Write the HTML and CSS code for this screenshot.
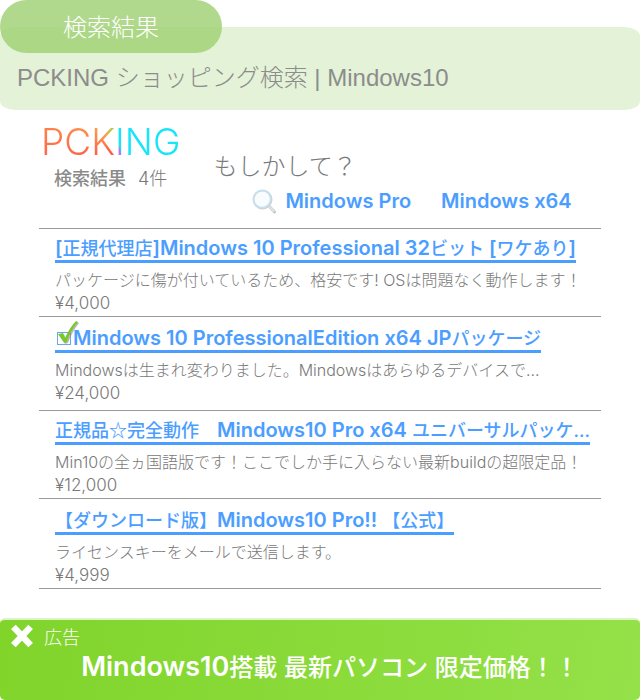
FILE: index.html
```html
<!DOCTYPE html>
<html lang="ja">
<head>
<meta charset="utf-8">
<meta name="viewport" content="width=device-width, initial-scale=1">
<title>PCKING ショッピング検索</title>
<link rel="stylesheet" href="styles.css">
</head>
<body>
<header class="header">
  <div class="tab">検索結果</div>
  <div class="banner"><h1 class="banner-title">PCKING ショッピング検索 | Mindows10</h1></div>
</header>
<main class="main">
  <section class="summary">
    <div class="brand">
      <div class="logo">PCKING</div>
      <p class="count"><b>検索結果</b><span>4件</span></p>
    </div>
    <div class="suggest">
      <p class="suggest-title">もしかして？</p>
      <nav class="suggest-links">
        <svg class="lens" viewBox="0 0 26 26" aria-hidden="true">
          <path d="M18 18l5.500 6" stroke="#c4c4c4" stroke-width="3" stroke-linecap="round"/>
          <path d="M17 17l5.500 6" stroke="#d3e6f2" stroke-width="2" stroke-linecap="round"/>
          <circle cx="11.500" cy="11.500" r="9" fill="#f8fcfe" stroke="#d2d2d2" stroke-width="2"/>
          <circle cx="11" cy="11" r="8.500" fill="none" stroke="#c3e2f5" stroke-width="1.500"/>
        </svg>
        <a class="suggest-link" href="#pro">Mindows Pro</a>
        <a class="suggest-link" href="#x64">Mindows x64</a>
      </nav>
    </div>
  </section>
  <ul class="results">
    <li class="item">
      <a class="title" href="#1"><span class="latin">[</span>正規代理店<span class="latin">]Mindows 10 Professional 32</span>ビット<span class="latin"> [</span>ワケあり<span class="latin">]</span></a>
      <p class="text">パッケージに傷が付いているため、格安です! OSは問題なく動作します！</p>
      <p class="text price">¥4,000</p>
    </li>
    <li class="item item-picked">
      <a class="title" href="#2"><svg class="check" viewBox="0 0 24 28" aria-hidden="true"><rect x="2.500" y="12.500" width="13" height="12" fill="#fff" stroke="#68a9ee"/><path d="M4 15l5-1 2 5Q16 8 22 2l2 1Q17 12 13 23l-3 1z" fill="#8c8c8c" opacity=".6"/><path d="M3 14l5-1 2 5Q15 7 21 1l2 1Q15 11 11.500 22.500H9z" fill="#79c82b"/></svg><span class="latin">Mindows 10 ProfessionalEdition x64 JP</span>パッケージ</a>
      <p class="text">Mindowsは生まれ変わりました。Mindowsはあらゆるデバイスで...</p>
      <p class="text price">¥24,000</p>
    </li>
    <li class="item">
      <a class="title" href="#3">正規品<span class="star">☆</span>完全動作　<span class="latin">Mindows10 Pro x64 </span>ユニバーサルパッケ...</a>
      <p class="text">Min10の全ヵ国語版です！ここでしか手に入らない最新buildの超限定品！</p>
      <p class="text price">¥12,000</p>
    </li>
    <li class="item item-last">
      <a class="title" href="#4">【ダウンロード版】<span class="latin">Mindows10 Pro!! </span>【公式】</a>
      <p class="text">ライセンスキーをメールで送信します。</p>
      <p class="text price">¥4,999</p>
    </li>
  </ul>
</main>
<footer class="ad">
  <div class="ad-head">
    <button class="close" type="button" aria-label="閉じる"><svg viewBox="0 0 24 26" aria-hidden="true"><path d="M4 4.500l16 17M20 4.500l-16 17" stroke="#fff" stroke-width="6"/></svg></button>
    <span>広告</span>
  </div>
  <a class="ad-text" href="#ad"><span class="ad-latin">Mindows10</span>搭載<span class="ad-latin"> </span>最新パソコン<span class="ad-latin"> </span>限定価格！！</a>
</footer>
</body>
</html>
```
FILE: styles.css
```css
* { box-sizing: border-box; }
body {
  margin: 0;
  min-height: 100vh;
  display: flex;
  flex-direction: column;
  background: #fff;
  color: #787878;
  font-family: Inter, "Noto Sans CJK JP", sans-serif;
  font-size: 16px;
}
h1, p, ul { margin: 0; padding: 0; font-weight: 400; }
a { text-decoration: none; }
.tab {
  position: relative;
  width: 222px;
  height: 53px;
  margin-bottom: -26px;
  border-radius: 27px;
  background: rgba(157, 207, 112, .8);
  color: #fff;
  font-size: 24px;
  font-weight: 300;
  line-height: 56px;
  text-align: center;
}
.banner {
  padding: 33px 17px 14px;
  border-radius: 16px / 9px;
  background: #e4f2d7;
}
.banner-title {
  color: #8c8c8c;
  font-family: "Liberation Sans", "Noto Sans CJK JP", sans-serif;
  font-size: 24px;
  font-weight: 300;
  line-height: 36px;
}
.main { padding: 10px 39px 0; }
.summary { display: flex; gap: 33px; height: 108px; }
.logo {
  margin-left: 2px;
  font-size: 37px;
  font-weight: 300;
  line-height: 44px;
  background: conic-gradient(from 0deg at 56% 60%, #18e4fa 0 40%, #9b7cff 47%, #ff70cf 53%, #ff5b45 62%, #ff654b 72%, #ff9b4a 86%, #b7cf45 94%, #18e4fa);
  -webkit-background-clip: text;
  background-clip: text;
  color: transparent;
}
.count { display: flex; gap: 12px; padding-left: 15px; font-size: 18px; font-weight: 300; line-height: 30px; }
.count b { color: #8a8a8a; font-weight: 500; }
.suggest { padding-top: 29px; }
.suggest-title { font-size: 24px; font-weight: 300; line-height: 36px; }
.suggest-links { display: flex; align-items: center; padding-left: 38px; gap: 30px; }
.lens { width: 26px; height: 26px; margin-right: -22px; fill: none; }
.suggest-link { color: #4b9eff; font-size: 20px; font-weight: 600; line-height: 32px; }
.results { list-style: none; border-top: 1px solid #999; }
.item { padding: 8px 0 1px 16px; border-bottom: 1px solid #999; }
.item-picked { padding-top: 10px; padding-bottom: 5px; }
.item-last { padding-top: 10px; }
.title {
  display: table;
  margin-bottom: 6px;
  border-bottom: 3px solid #4b9eff;
  color: #4b9eff;
  font-size: 18px;
  font-weight: 500;
  line-height: 23px;
  white-space: nowrap;
}
.latin { font-size: 20px; font-weight: 600; }
.star { font-family: "Noto Sans CJK JP", sans-serif; line-height: 1; }
.check { width: 24px; height: 28px; margin: -8px -6px -3px 0; vertical-align: baseline; }
.text { font-size: 16px; font-weight: 300; line-height: 23px; white-space: nowrap; }
.price { font-size: 17px; }
.ad {
  margin-top: auto;
  padding: 2px 9px 15px;
  border-top: 2px solid #dcf3c5;
  border-radius: 5px;
  background: linear-gradient(100deg, #80d42a, #94e149);
  color: #fff;
}
.ad-head { display: flex; align-items: center; gap: 9px; height: 28px; font-size: 18px; font-weight: 300; }
.close { width: 26px; height: 28px; padding: 0; border: 0; background: none; }
.close svg { display: block; width: 26px; height: 28px; fill: none; }
.ad-text { display: block; padding-left: 20px; color: #fff; font-size: 24px; font-weight: 500; line-height: 34px; text-align: center; }
.ad-latin { font-size: 27px; font-weight: 600; }
```
